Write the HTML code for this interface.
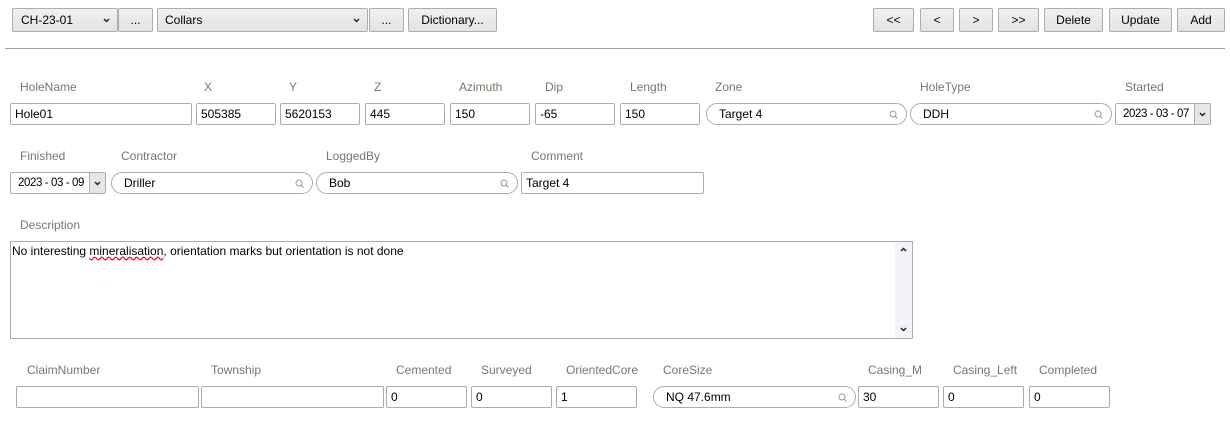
<!DOCTYPE html>
<html><head><meta charset="utf-8"><style>
body{margin:0;width:1230px;height:423px;background:#fff;position:relative;overflow:hidden;font-family:"Liberation Sans",sans-serif;font-size:12px;color:#000}
div{position:absolute;box-sizing:border-box}
.b{background:linear-gradient(#f1f1f1,#e3e3e3);border:1px solid #adadad;border-radius:2px;height:24px;top:8px;text-align:center;line-height:22px;font-size:12px}
.b svg{position:absolute;right:7px;top:9px}
.l{color:#7d756b;font-size:12px}
.i{border:1px solid #abadb3;border-radius:2px;height:22px;line-height:20px;padding-left:4px;background:#fff}
.r{border:1px solid #abadb3;border-radius:11px;height:22px;line-height:20px;padding-left:12px;background:#fff}
.r svg{position:absolute;right:8px;top:6px}
.d{border:1px solid #abadb3;border-radius:2px;height:22px;line-height:20px;padding-left:7px;background:#fff;letter-spacing:-0.4px;font-size:11.5px;white-space:nowrap}
.d .a{position:absolute;right:0;top:0;width:16px;height:20px;background:#e6e6e6;border-left:1px solid #abadb3}
.d .a svg{position:absolute;left:4px;top:8px}
</style></head><body>
<div class="b" style="left:12px;width:106px;text-align:left;padding-left:8px">CH-23-01<svg width="7" height="5"><path d="M1 1l2.5 2.5L6 1" fill="none" stroke="#222" stroke-width="1.5"/></svg></div>
<div class="b" style="left:118px;width:35px">...</div>
<div class="b" style="left:157px;width:211px;text-align:left;padding-left:7px">Collars<svg width="7" height="5"><path d="M1 1l2.5 2.5L6 1" fill="none" stroke="#222" stroke-width="1.5"/></svg></div>
<div class="b" style="left:369px;width:35px">...</div>
<div class="b" style="left:408px;width:89px">Dictionary...</div>
<div class="b" style="left:873px;width:41px">&lt;&lt;</div>
<div class="b" style="left:920px;width:34px">&lt;</div>
<div class="b" style="left:959px;width:34px">&gt;</div>
<div class="b" style="left:998px;width:41px">&gt;&gt;</div>
<div class="b" style="left:1044px;width:59px">Delete</div>
<div class="b" style="left:1109px;width:63px">Update</div>
<div class="b" style="left:1177px;width:48px">Add</div>
<div style="left:5px;top:48px;width:1220px;height:1px;background:#a0a0a0"></div>

<div class="l" style="left:20px;top:80px">HoleName</div>
<div class="l" style="left:204px;top:80px">X</div>
<div class="l" style="left:289px;top:80px">Y</div>
<div class="l" style="left:374px;top:80px">Z</div>
<div class="l" style="left:459px;top:80px">Azimuth</div>
<div class="l" style="left:545px;top:80px">Dip</div>
<div class="l" style="left:630px;top:80px">Length</div>
<div class="l" style="left:715px;top:80px">Zone</div>
<div class="l" style="left:920px;top:80px">HoleType</div>
<div class="l" style="left:1125px;top:80px">Started</div>
<div class="i" style="left:10px;top:103px;width:182px">Hole01</div>
<div class="i" style="left:196px;top:103px;width:80px">505385</div>
<div class="i" style="left:280px;top:103px;width:80px">5620153</div>
<div class="i" style="left:365px;top:103px;width:80px">445</div>
<div class="i" style="left:450px;top:103px;width:80px">150</div>
<div class="i" style="left:535px;top:103px;width:80px">-65</div>
<div class="i" style="left:620px;top:103px;width:80px">150</div>
<div class="r" style="left:706px;top:103px;width:201px">Target 4<svg width="9" height="9"><circle cx="4" cy="4" r="3" fill="none" stroke="#999"/><path d="M6 6l2.5 2.5" stroke="#999"/></svg></div>
<div class="r" style="left:910px;top:103px;width:202px">DDH<svg width="9" height="9"><circle cx="4" cy="4" r="3" fill="none" stroke="#999"/><path d="M6 6l2.5 2.5" stroke="#999"/></svg></div>
<div class="d" style="left:1115px;top:103px;width:96px">2023 - 03 - 07<div class="a"><svg width="7" height="5"><path d="M1 1l2.5 2.5L6 1" fill="none" stroke="#222" stroke-width="1.5"/></svg></div></div>

<div class="l" style="left:20px;top:149px">Finished</div>
<div class="l" style="left:121px;top:149px">Contractor</div>
<div class="l" style="left:326px;top:149px">LoggedBy</div>
<div class="l" style="left:531px;top:149px">Comment</div>
<div class="d" style="left:10px;top:172px;width:96px">2023 - 03 - 09<div class="a"><svg width="7" height="5"><path d="M1 1l2.5 2.5L6 1" fill="none" stroke="#222" stroke-width="1.5"/></svg></div></div>
<div class="r" style="left:111px;top:172px;width:202px">Driller<svg width="9" height="9"><circle cx="4" cy="4" r="3" fill="none" stroke="#999"/><path d="M6 6l2.5 2.5" stroke="#999"/></svg></div>
<div class="r" style="left:316px;top:172px;width:202px">Bob<svg width="9" height="9"><circle cx="4" cy="4" r="3" fill="none" stroke="#999"/><path d="M6 6l2.5 2.5" stroke="#999"/></svg></div>
<div class="i" style="left:521px;top:172px;width:183px">Target 4</div>

<div class="l" style="left:20px;top:218px">Description</div>
<div style="left:10px;top:241px;width:903px;height:98px;border:1px solid #abadb3;padding:2px 1px">No interesting <span style="text-decoration:underline wavy red">mineralisation</span>, orientation marks but orientation is not done
<div style="right:0;top:0;width:17px;height:96px;background:#f4f4f8"><svg style="position:absolute;left:5px;top:5px" width="7" height="5"><path d="M1 4l2.5-2.5L6 4" fill="none" stroke="#222" stroke-width="1.5"/></svg><svg style="position:absolute;left:5px;bottom:6px" width="7" height="5"><path d="M1 1l2.5 2.5L6 1" fill="none" stroke="#222" stroke-width="1.5"/></svg></div></div>

<div class="l" style="left:27px;top:363px">ClaimNumber</div>
<div class="l" style="left:211px;top:363px">Township</div>
<div class="l" style="left:396px;top:363px">Cemented</div>
<div class="l" style="left:481px;top:363px">Surveyed</div>
<div class="l" style="left:566px;top:363px">OrientedCore</div>
<div class="l" style="left:663px;top:363px">CoreSize</div>
<div class="l" style="left:868px;top:363px">Casing_M</div>
<div class="l" style="left:953px;top:363px">Casing_Left</div>
<div class="l" style="left:1039px;top:363px">Completed</div>
<div class="i" style="left:16px;top:386px;width:183px"></div>
<div class="i" style="left:201px;top:386px;width:183px"></div>
<div class="i" style="left:386px;top:386px;width:81px">0</div>
<div class="i" style="left:471px;top:386px;width:81px">0</div>
<div class="i" style="left:556px;top:386px;width:81px">1</div>
<div class="r" style="left:653px;top:386px;width:203px">NQ 47.6mm<svg width="9" height="9"><circle cx="4" cy="4" r="3" fill="none" stroke="#999"/><path d="M6 6l2.5 2.5" stroke="#999"/></svg></div>
<div class="i" style="left:858px;top:386px;width:81px">30</div>
<div class="i" style="left:943px;top:386px;width:81px">0</div>
<div class="i" style="left:1029px;top:386px;width:81px">0</div>
</body></html>
